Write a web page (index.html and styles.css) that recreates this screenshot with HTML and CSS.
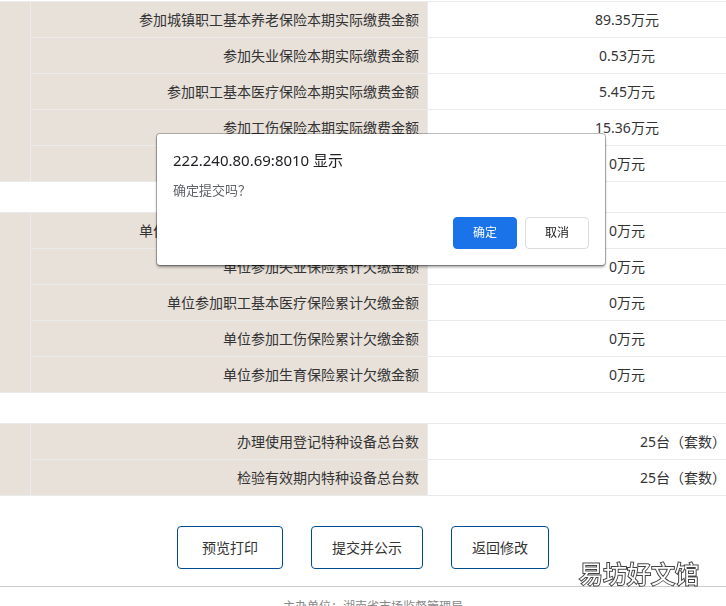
FILE: index.html
```
<!DOCTYPE html>
<html lang="zh-CN">
<head>
    <meta charset="UTF-8">
    <meta name="viewport" content="width=device-width, initial-scale=1">
    <title>预览</title>
    <link rel="stylesheet" href="styles.css">
</head>
<body>
    <main class="report">
        <table class="info-table">
            <tr>
                <th class="group" rowspan="5"></th>
                <th class="label" scope="row">参加城镇职工基本养老保险本期实际缴费金额</th>
                <td class="value">89.35万元</td>
            </tr>
            <tr>
                <th class="label" scope="row">参加失业保险本期实际缴费金额</th>
                <td class="value">0.53万元</td>
            </tr>
            <tr>
                <th class="label" scope="row">参加职工基本医疗保险本期实际缴费金额</th>
                <td class="value">5.45万元</td>
            </tr>
            <tr>
                <th class="label" scope="row">参加工伤保险本期实际缴费金额</th>
                <td class="value">15.36万元</td>
            </tr>
            <tr>
                <th class="label" scope="row"></th>
                <td class="value">0万元</td>
            </tr>
        </table>

        <table class="info-table">
            <tr>
                <th class="group" rowspan="5"></th>
                <th class="label" scope="row">单位参加城镇职工基本养老保险累计欠缴金额</th>
                <td class="value">0万元</td>
            </tr>
            <tr>
                <th class="label" scope="row">单位参加失业保险累计欠缴金额</th>
                <td class="value">0万元</td>
            </tr>
            <tr>
                <th class="label" scope="row">单位参加职工基本医疗保险累计欠缴金额</th>
                <td class="value">0万元</td>
            </tr>
            <tr>
                <th class="label" scope="row">单位参加工伤保险累计欠缴金额</th>
                <td class="value">0万元</td>
            </tr>
            <tr>
                <th class="label" scope="row">单位参加生育保险累计欠缴金额</th>
                <td class="value">0万元</td>
            </tr>
        </table>

        <table class="info-table">
            <tr>
                <th class="group" rowspan="2"></th>
                <th class="label" scope="row">办理使用登记特种设备总台数</th>
                <td class="value count">25台（套数）</td>
            </tr>
            <tr>
                <th class="label" scope="row">检验有效期内特种设备总台数</th>
                <td class="value count">25台（套数）</td>
            </tr>
        </table>

        <div class="actions">
            <button type="button" class="btn btn-print">预览打印</button>
            <button type="button" class="btn">提交并公示</button>
            <button type="button" class="btn">返回修改</button>
        </div>
    </main>

    <footer class="footer">主办单位：湖南省市场监督管理局</footer>

    <dialog class="confirm" open aria-labelledby="confirm-title">
        <h1 class="confirm-title" id="confirm-title">222.240.80.69:8010 显示</h1>
        <p class="confirm-text">确定提交吗？</p>
        <div class="confirm-actions">
            <button type="button" class="confirm-btn primary">确定</button>
            <button type="button" class="confirm-btn">取消</button>
        </div>
    </dialog>

    <div class="watermark">易坊好文馆</div>
</body>
</html>
```
FILE: styles.css
```
* {
    box-sizing: border-box;
}
html {
    overflow: hidden;
}
body {
    margin: 0;
    background: #fff;
    color: #333;
    font-family: "Noto Sans", "Noto Sans CJK SC", sans-serif;
    font-size: 14px;
    line-height: 20px;
}
button {
    font-family: inherit;
    cursor: pointer;
}

/* report tables */
.report {
    padding-top: 1px;
}
.info-table {
    width: 100%;
    margin-bottom: 30px;
    border-collapse: separate;
    border-spacing: 0;
    border-top: 1px solid #ebebeb;
    table-layout: fixed;
}
.info-table th,
.info-table td {
    height: 36px;
    padding: 0;
    border-bottom: 1px solid #ebebeb;
    font-weight: normal;
}
.info-table .group,
.info-table .label {
    background: #e8e1da;
    border-right: 1px solid #ebebeb;
}
.info-table .group {
    width: 31px;
}
.info-table .label {
    width: 397px;
    padding-right: 8px;
    text-align: right;
}
.info-table .value {
    padding-left: 100px;
    text-align: center;
}
.info-table .count {
    font-family: "Noto Sans", "Noto Sans CJK TC", sans-serif;
    text-align: right;
}

/* page buttons */
.actions {
    display: flex;
    justify-content: center;
    gap: 28px;
    padding-bottom: 17px;
}
.btn {
    height: 43px;
    padding: 0 20px 2px;
    border: 1px solid #004b8d;
    border-radius: 4px;
    background: #fff;
    color: #333;
    font-size: 14px;
}
.btn-print {
    padding: 0 24px 2px;
}

.footer {
    padding: 10px 0 10px 20px;
    border-top: 1px solid #ccc;
    color: #888;
    font-family: "Noto Sans", "Noto Sans CJK TC", sans-serif;
    font-size: 12px;
    text-align: center;
}

/* confirm dialog */
.confirm {
    position: fixed;
    top: 134px;
    left: 157px;
    width: 448px;
    margin: 0;
    padding: 16px;
    border: none;
    border-radius: 3px;
    background: #fff;
    box-shadow: 0 0 0 1px rgba(0, 0, 0, 0.25), 0 2px 3px rgba(0, 0, 0, 0.4);
}
.confirm-title {
    margin: 0;
    color: #202124;
    font-size: 15px;
    font-weight: normal;
    line-height: 20px;
}
.confirm-text {
    margin: 10px 0 17px;
    color: #5f6368;
    font-family: "Noto Sans", "Noto Sans CJK TC", sans-serif;
    font-size: 13px;
    line-height: 20px;
}
.confirm-actions {
    display: flex;
    justify-content: flex-end;
    gap: 8px;
}
.confirm-btn {
    width: 64px;
    height: 32px;
    padding: 0 0 2px;
    border: 1px solid #dadce0;
    border-radius: 4px;
    background: #fff;
    color: #202124;
    font-size: 12px;
}
.confirm-btn.primary {
    border-color: #1a73e8;
    background: #1a73e8;
    color: #fff;
}

.watermark {
    position: fixed;
    right: 27px;
    bottom: 16px;
    color: #fff;
    font-size: 24px;
    line-height: 32px;
    -webkit-text-stroke: 2px #444;
    paint-order: stroke fill;
}
```
